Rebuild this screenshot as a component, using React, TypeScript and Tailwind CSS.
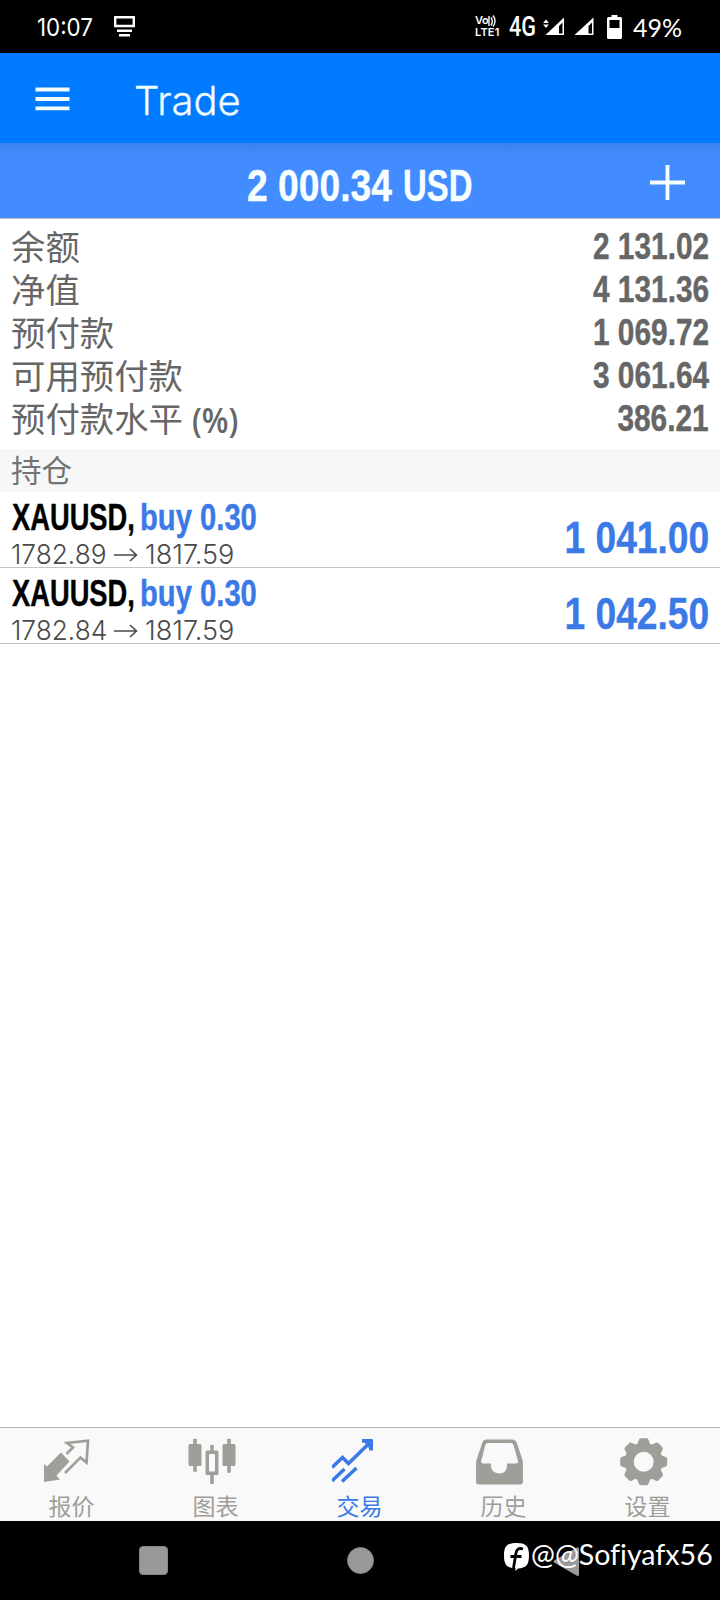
import React from "react";

const cjk = "font-['Inter','Noto_Sans_CJK_SC',sans-serif]";
const cond = "font-['Liberation_Sans',sans-serif] font-bold whitespace-pre [-webkit-text-stroke:0.4px_currentColor]";

const summary = [
  { label: "余额", value: "2 131.02" },
  { label: "净值", value: "4 131.36" },
  { label: "预付款", value: "1 069.72" },
  { label: "可用预付款", value: "3 061.64" },
  { label: "预付款水平", suffix: "(%)", value: "386.21" },
];

const positions = [
  { open: "1782.89", current: "1817.59", profit: "1 041.00" },
  { open: "1782.84", current: "1817.59", profit: "1 042.50" },
];

function StatusBar() {
  return (
    <div className="flex h-[53px] shrink-0 items-center bg-black pl-[37px] pr-[38px] text-white">
      <span className="w-[57px] origin-left scale-x-[0.93] whitespace-nowrap pt-[3px] font-['Inter',sans-serif] text-[24px] leading-none">10:07</span>
      <svg className="ml-5 h-[21px] w-[21px]" viewBox="0 0 21 21" fill="none" stroke="currentColor" strokeWidth="2.4">
        <path d="M1.200 1.200h18.600v8.800H1.200zM3 14.700h15M5 19.300h11" />
      </svg>
      <div className="flex-1" />
      <div className="flex w-[28px] flex-col gap-[1px] font-['Inter',sans-serif] font-semibold leading-none">
        <div className="flex h-[11px] items-center">
          <span className="text-[11px] leading-[11px] tracking-[-0.3px]">Vo</span>
          <svg className="h-[12px] w-[9px]" viewBox="0 0 9 12" fill="none" stroke="currentColor" strokeWidth="1.4">
            <path d="M1 1v10M3 2.500q2.600 4 0 8M5 .5q4 5.500 0 11" />
          </svg>
        </div>
        <span className="text-[11px] leading-[11px] tracking-[0.2px]">LTE1</span>
      </div>
      <span className="ml-[6px] w-[28px] origin-left scale-x-[0.8] whitespace-nowrap pt-[2px] font-['Roboto',sans-serif] text-[27px] font-medium leading-none">4G</span>
      <svg className="ml-[6px] h-[19px] w-[22px]" viewBox="0 0 22 19" fill="currentColor">
        <path d="M3 2.500l2.900 3.500H.1zM3 11l2.900-3.500H.1z" />
        <path fillRule="evenodd" d="M21 .5V18H2.500zM19.500 5.500L16 9v7.500h3.500z" />
      </svg>
      <svg className="ml-[9px] h-[19px] w-[20px]" viewBox="0 0 20 19" fill="currentColor">
        <path fillRule="evenodd" d="M19.500 .5V18H.5zM18 5.500L14.500 9v7.500H18z" />
      </svg>
      <svg className="ml-[13px] h-[24px] w-[15px]" viewBox="0 0 15 24" fill="currentColor">
        <path fillRule="evenodd" d="M4.500 0h6v2H13.500Q15 2 15 3.500V22.500Q15 24 13.500 24H1.500Q0 24 0 22.500V3.500Q0 2 1.500 2h3zM2.500 5v8h10V5z" />
      </svg>
      <span className="ml-[11px] w-[49px] whitespace-nowrap pt-[2px] font-['Lato',sans-serif] text-[25px] leading-none">49%</span>
    </div>
  );
}

function AppBar() {
  return (
    <header className="flex h-[90px] shrink-0 items-center bg-[#007aff] pl-[35px] text-[#f2fdff]">
      <svg className="mt-[1px] h-[24px] w-[35px]" viewBox="0 0 35 24" fill="none" stroke="currentColor" strokeWidth="3.8">
        <path d="M.5 2.500h34M.5 12h34M.5 21.300h34" />
      </svg>
      <h1 className="ml-[64px] pt-[5px] font-['Inter',sans-serif] text-[40px] font-light leading-none [-webkit-text-stroke:0.3px_currentColor]">Trade</h1>
    </header>
  );
}

function QuotesIcon() {
  return (
    <svg className="h-[48px] w-[48px]" viewBox="0 0 48 48">
      <path fill="#9f9e99" d="M0 26L3 28.500 17 14.500 25.500 23.500 12.500 37.500 16 41.500 0 44z" />
      <path fill="none" stroke="#9f9e99" strokeWidth="2.700" d="M22.500 16L29 9.500 23 5 44 2.700 42.500 24.500 36.500 19.500 21 35" />
    </svg>
  );
}

function ChartIcon() {
  return (
    <svg className="h-[48px] w-[48px]" viewBox="0 0 48 48" fill="#9f9e99">
      <path d="M7 .8v33M41 .8v34M24 7v39" stroke="#9f9e99" strokeWidth="3.600" />
      <rect x=".5" y="6" width="13" height="22" rx="1.500" />
      <rect x="34.500" y="6" width="13" height="22" rx="1.500" />
      <rect x="17.500" y="12.500" width="13" height="24.500" rx="1.500" />
      <rect x="21" y="16" width="6" height="17.500" rx="1" fill="#f9f9f9" />
    </svg>
  );
}

function TradeIcon() {
  return (
    <svg className="h-[48px] w-[48px]" viewBox="0 0 48 48" fill="none" stroke="#3b7ae6" strokeWidth="3.600">
      <path d="M0 29.500L10.500 19.500 16.500 25.500 39 3.500M0 43L12.500 31M10 43.500L24.500 30" />
      <path fill="#3b7ae6" stroke="none" d="M30 1H40Q41 1 41 2V12.500H37.500L36 8 33 5 30 4.500z" />
    </svg>
  );
}

function HistoryIcon() {
  return (
    <svg className="h-[48px] w-[48px]" viewBox="0 0 48 48" fill="#9f9e99">
      <path
        fillRule="evenodd"
        transform="translate(-1 -.5)"
        d="M11 2H37.500Q40.500 2 41.500 4.500L47 21Q48 24 48 26V44Q48 47 45 47H4Q1 47 1 44V26Q1 24 2 21L7.500 4.500Q8.500 2 11 2zM13 5.500Q11 5.500 10.300 7.500L6.200 23.500Q6 26 8 26H16V28.500C16 33 20 36 24.500 36S32 33 32 28.500V26H41Q43.500 26 43 23.500L38.500 7.500Q38 5.500 36 5.500z"
      />
    </svg>
  );
}

function SettingsIcon() {
  return (
    <svg className="h-[48px] w-[48px]" viewBox="0 0 48 48">
      <g fill="#9f9e99" transform="translate(23.700 23.700)">
        {[0, 45, 90, 135].map((a) => (
          <path key={a} transform={`rotate(${a})`} d="M-3-23.500H3Q4.500-23.500 5-21.500L7-16V16L5 21.500Q4.500 23.500 3 23.500H-3Q-4.500 23.500-5 21.500L-7 16V-16L-5-21.500Q-4.500-23.500-3-23.500z" />
        ))}
        <circle r="19" />
        <circle r="10" fill="#f9f9f9" />
      </g>
    </svg>
  );
}

const tabs = [
  { label: "报价", Icon: QuotesIcon },
  { label: "图表", Icon: ChartIcon },
  { label: "交易", Icon: TradeIcon, active: true },
  { label: "历史", Icon: HistoryIcon },
  { label: "设置", Icon: SettingsIcon },
];

export default function App() {
  return (
    <div className={`flex h-[1600px] w-[720px] flex-col overflow-hidden bg-white ${cjk}`}>
      <StatusBar />
      <AppBar />

      <section className="relative flex h-[76px] shrink-0 items-center justify-center border-b border-[#b9bfca] bg-[linear-gradient(to_bottom,#3c81ec,#428cff_12px)] text-[#f8ffff]">
        <div className="flex w-[226px] pt-[9px] text-[45px] leading-none">
          <span className={`${cond} w-[156px] origin-left scale-x-[0.828]`}>2 000.34</span>
          <span className={`${cond} w-[68px] origin-left scale-x-[0.73]`}>USD</span>
        </div>
        <svg className="absolute right-[35px] top-[22px] h-[35px] w-[35px]" viewBox="0 0 35 35" stroke="currentColor" strokeWidth="3.800">
          <path d="M0 17.500h35M17.500 0v35" />
        </svg>
      </section>

      <section className="flex h-[230px] shrink-0 flex-col pl-[11px] pr-[11px] pt-[7px] text-[#666]">
        {summary.map((row) => (
          <div key={row.label} className="flex h-[43px] items-center justify-between">
            <div className="flex items-center text-[34.4px] leading-[43px]">
              {row.label}
              {row.suffix && (
                <span className="ml-[9px] origin-left scale-x-[0.91] font-['Open_Sans',sans-serif] text-[34px] font-semibold leading-none">
                  {row.suffix}
                </span>
              )}
            </div>
            <span className={`${cond} origin-right scale-x-[0.817] text-[36.500px] leading-none`}>{row.value}</span>
          </div>
        ))}
      </section>

      <div className="flex h-[43px] shrink-0 items-center bg-[#f7f7f7] pl-[11px] pt-[1px] text-[30.500px] text-[#737373]">持仓</div>

      <section className="shrink-0">
        {positions.map((p) => (
          <div key={p.open} className="flex h-[76px] justify-between border-b border-[#c4c4c4] pl-[12px] pr-[11px]">
            <div className="flex flex-col">
              <div className="flex h-[43px] items-center pt-[10px]">
                <span className={`${cond} w-[128px] origin-left scale-x-[0.748] text-[36.500px] leading-none text-black`}>XAUUSD,</span>
                <span className={`${cond} origin-left scale-x-[0.8] text-[36.500px] leading-none text-[#3b7ae6]`}>buy 0.30</span>
              </div>
              <div className="flex h-[32px] items-center pt-[7px] font-['Inter',sans-serif] text-[27.500px] font-light leading-none text-[#4a4a4a]">
                <span className="-ml-[1px] w-[103px] origin-left scale-x-[0.955]">{p.open}</span>
                <svg className="h-[14px] w-[24px]" viewBox="0 0 24 14" fill="none" stroke="currentColor" strokeWidth="1.600">
                  <path d="M0 7h23M16 1l6.500 6-6.500 6" />
                </svg>
                <span className="ml-[7px] origin-left scale-x-[0.985]">{p.current}</span>
              </div>
            </div>
            <span className={`${cond} origin-right scale-x-[0.826] pt-[23px] text-[45px] leading-none text-[#3b7ae6]`}>{p.profit}</span>
          </div>
        ))}
      </section>

      <main className="flex-1" />

      <nav className="grid h-[94px] shrink-0 grid-cols-5 border-t border-[#b0b0b0] bg-[#f9f9f9]">
        {tabs.map(({ label, Icon, active }) => (
          <div key={label} className="flex flex-col items-center pt-[10px]">
            <div className="mr-[9px]">
              <Icon />
            </div>
            <span className={`mr-[1px] mt-[7px] text-[23px] leading-[28px] ${active ? "text-[#3b7ae6]" : "text-[#9f9e99]"}`}>{label}</span>
          </div>
        ))}
      </nav>

      <footer className="relative flex h-[79px] shrink-0 items-start bg-black pl-[139px] pt-[25px]">
        <div className="h-[29px] w-[29px] rounded-[4px] border border-[#858585] bg-[#999]" />
        <div className="ml-[179px] mt-[1px] h-[27px] w-[27px] rounded-full border border-[#858585] bg-[#999]" />
        <svg className="ml-[179px] h-[31px] w-[26px]" viewBox="0 0 26 31" fill="#999">
          <path d="M24 1.500Q26 .5 26 3V28Q26 31 23.500 29.500L1 16.500Q0 15.500 1 14.500z" />
        </svg>
        <div className="absolute right-[7px] top-[22px] flex items-start text-white">
          <svg className="h-[28px] w-[25px]" viewBox="0 0 25 28">
            <path fill="#fff" d="M12.500 0C22 0 25 3 25 12.500S22 25 14 25.500L11.500 28V25C3 25 0 22 0 12.500S3 0 12.500 0z" />
            <path fill="none" stroke="#000" strokeWidth="2.800" d="M19 6Q13 4 12 10L9.500 25M6.500 13.500H17.500" />
          </svg>
          <span className="-mt-[3px] ml-[2px] w-[182px] origin-left scale-x-[1.02] whitespace-nowrap font-['Lato',sans-serif] text-[28px] leading-[28px] [font-variant-ligatures:none]">@@Sofiyafx56</span>
        </div>
      </footer>
    </div>
  );
}
